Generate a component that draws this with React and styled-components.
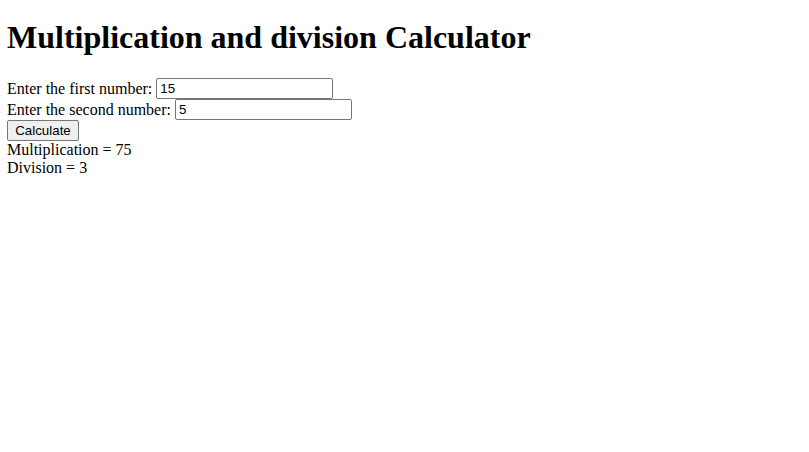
import React, { useState } from 'react'
import styled, { createGlobalStyle } from 'styled-components'

const GlobalStyle = createGlobalStyle`
  body {
    margin: 8px 7px;
    background: #fff;
    color: #000;
    font-family: "Liberation Serif", "Times New Roman", serif;
    font-size: 16px;
  }
`

const Title = styled.h1`
  margin: 11.44px 0 21.44px;
  font-size: 32px;
  font-weight: bold;
`

const Form = styled.form`
  margin: 0;
`

const Line = styled.div`
  line-height: 21px;
  height: 21px;
`

const NumberInput = styled.input`
  box-sizing: border-box;
  width: 177px;
  height: 21px;
  margin: 0;
  padding: 1px 3px;
  border: 1px solid #767676;
  border-radius: 2px;
  background: #fff;
  color: #000;
  font-family: "Liberation Sans", Arial, sans-serif;
  font-size: 13.33px;
  vertical-align: top;
  outline: none;
`

const Button = styled.button`
  box-sizing: border-box;
  width: 72px;
  height: 21px;
  margin: 0;
  padding: 0 6px;
  background: #efefef;
  border: 1px solid #767676;
  border-radius: 2px;
  color: #000;
  font-family: "Liberation Sans", Arial, sans-serif;
  font-size: 13.33px;
  vertical-align: top;
`

const Result = styled.div`
  line-height: 18px;
`

const App = () => {
  const [ first, setFirst ] = useState('15')
  const [ second, setSecond ] = useState('5')
  const [ result, setResult ] = useState({ mul: 75, div: 3 })

  const handleCalculate = (e) => {
    e.preventDefault()
    const a = parseFloat(first)
    const b = parseFloat(second)
    setResult({ mul: a * b, div: a / b })
  }

  return (
    <>
      <GlobalStyle />
      <Title>Multiplication and division Calculator</Title>
      <Form onSubmit={handleCalculate}>
        <Line>
          Enter the first number: <NumberInput value={first} onChange={e => setFirst(e.target.value)} />
        </Line>
        <Line>
          Enter the second number: <NumberInput value={second} onChange={e => setSecond(e.target.value)} />
        </Line>
        <Line>
          <Button type="submit">Calculate</Button>
        </Line>
      </Form>
      <Result>Multiplication = {result.mul}</Result>
      <Result>Division = {result.div}</Result>
    </>
  )
}

export default App
